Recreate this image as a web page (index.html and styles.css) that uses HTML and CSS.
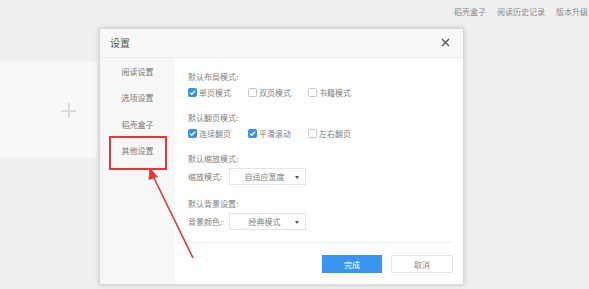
FILE: index.html
```html
<!DOCTYPE html>
<html lang="zh">
<head>
<meta charset="utf-8">
<link rel="stylesheet" href="styles.css">
</head>
<body>
<div class="page">
  <div class="topbar">
    <span>稻壳盒子</span>
    <span>阅读历史记录</span>
    <span>版本升级</span>
  </div>
  <div class="card"><span class="plus"></span></div>
</div>

<div class="dialog">
  <div class="dlg-head">
    <span class="dlg-title">设置</span>
    <svg class="close" width="9" height="9" viewBox="0 0 9 9"><path d="M1 1L8 8M8 1L1 8" stroke="#555" stroke-width="1.3"/></svg>
  </div>
  <div class="dlg-body">
    <div class="side">
      <div class="side-item">阅读设置</div>
      <div class="side-item">选项设置</div>
      <div class="side-item">稻壳盒子</div>
      <div class="side-item mark">其他设置</div>
    </div>
    <div class="main">
      <div class="group">
        <div class="label">默认布局模式:</div>
        <div class="row">
          <span class="opt"><span class="box on"><svg width="9" height="9" viewBox="0 0 9 9"><path d="M2 4.6L3.8 6.3L7 2.8" fill="none" stroke="#fff" stroke-width="1.3"/></svg></span>单页模式</span>
          <span class="opt"><span class="box"></span>双页模式</span>
          <span class="opt"><span class="box"></span>书籍模式</span>
        </div>
      </div>
      <div class="group">
        <div class="label">默认翻页模式:</div>
        <div class="row">
          <span class="opt"><span class="box on"><svg width="9" height="9" viewBox="0 0 9 9"><path d="M2 4.6L3.8 6.3L7 2.8" fill="none" stroke="#fff" stroke-width="1.3"/></svg></span>连续翻页</span>
          <span class="opt"><span class="box on"><svg width="9" height="9" viewBox="0 0 9 9"><path d="M2 4.6L3.8 6.3L7 2.8" fill="none" stroke="#fff" stroke-width="1.3"/></svg></span>平滑滚动</span>
          <span class="opt"><span class="box"></span>左右翻页</span>
        </div>
      </div>
      <div class="group">
        <div class="label">默认缩放模式:</div>
        <div class="row sel-row">
          <span class="sel-label">缩放模式:</span>
          <span class="select"><span class="sel-text">自适应宽度</span><span class="caret"></span></span>
        </div>
      </div>
      <div class="group">
        <div class="label">默认背景设置:</div>
        <div class="row sel-row">
          <span class="sel-label">背景颜色:</span>
          <span class="select"><span class="sel-text">经典模式</span><span class="caret"></span></span>
        </div>
      </div>
      <div class="footer">
        <span class="btn primary">完成</span>
        <span class="btn">取消</span>
      </div>
    </div>
  </div>
</div>

<svg class="arrow" width="589" height="289" viewBox="0 0 589 289">
  <line x1="193" y1="258" x2="153" y2="176" stroke="#e2383c" stroke-width="1.6"/>
  <path d="M149.5 167.5L158 177L148.5 180Z" fill="#e2383c"/>
</svg>
</body>
</html>
```

FILE: styles.css
```css
* { box-sizing: border-box; }
html, body {
  margin: 0;
  padding: 0;
  width: 589px;
  height: 289px;
  overflow: hidden;
  background: #f0f0f0;
  font-family: "Noto Sans CJK SC", "Noto Sans", sans-serif;
  color: #777;
}
.page {
  position: relative;
  width: 589px;
  height: 289px;
}
.topbar {
  height: 22px;
  display: flex;
  justify-content: flex-end;
  align-items: center;
  gap: 11px;
  padding-right: 1px;
  font-size: 8px;
  color: #888;
}
.card {
  margin-top: 40px;
  width: 97px;
  height: 96px;
  background: #f8f8f8;
  position: relative;
}
.plus {
  position: absolute;
  left: 61px;
  top: 41px;
  width: 15px;
  height: 15px;
}
.plus::before, .plus::after {
  content: "";
  position: absolute;
  background: #dcdcdc;
}
.plus::before { left: 0; top: 7px; width: 15px; height: 1.5px; }
.plus::after { left: 7px; top: 0; width: 1.5px; height: 15px; }

.dialog {
  position: absolute;
  left: 99px;
  top: 28px;
  width: 365px;
  height: 257px;
  background: #fff;
  border: 1px solid #d8d8d8;
  box-shadow: 0 0 5px rgba(0,0,0,0.18);
  display: flex;
  flex-direction: column;
}
.dlg-head {
  height: 29px;
  flex: none;
  display: flex;
  align-items: center;
  justify-content: space-between;
  padding: 0 13px 1px 10px;
  background: #f8f8f8;
  border-bottom: 1px solid #ececec;
}
.dlg-title {
  font-size: 10px;
  color: #555;
}
.dlg-body {
  flex: 1;
  display: flex;
}
.side {
  width: 75px;
  flex: none;
  background: #f7f7f7;
}
.side-item {
  height: 26.5px;
  display: flex;
  align-items: center;
  justify-content: center;
  font-size: 8px;
  color: #777;
  position: relative;
}
.side-item.mark::after {
  content: "";
  position: absolute;
  left: 9px;
  top: -2px;
  width: 54px;
  height: 30px;
  border: 2px solid #dc3a3f;
}
.main {
  flex: 1;
  display: flex;
  flex-direction: column;
  padding: 12px 10px 11px 13px;
}
.group { margin-bottom: 11px; }
.label {
  height: 14px;
  line-height: 14px;
  font-size: 8px;
  color: #808080;
}
.row {
  height: 16px;
  display: flex;
  align-items: center;
  font-size: 8px;
  color: #808080;
}
.opt {
  width: 60px;
  display: flex;
  align-items: center;
  gap: 2px;
}
.box {
  width: 9px;
  height: 9px;
  border: 1px solid #c4c4c4;
  border-radius: 1.5px;
  background: #fff;
  display: inline-flex;
}
.box.on {
  background: #3c8fe8;
  border-color: #3c8fe8;
}
.box svg { margin: -1px; }
.sel-row { height: 20px; }
.sel-label { width: 41px; }
.select {
  width: 77px;
  height: 17px;
  border: 1px solid #e4e4e4;
  display: flex;
  align-items: center;
  justify-content: center;
  position: relative;
  background: #fff;
}
.sel-text { margin-right: 6px; }
.caret {
  position: absolute;
  right: 6px;
  top: 7px;
  border-left: 2.5px solid transparent;
  border-right: 2.5px solid transparent;
  border-top: 3px solid #555;
}
.footer {
  margin-top: auto;
  border-top: 1px solid #efefef;
  padding-top: 12px;
  display: flex;
  justify-content: flex-end;
  gap: 9px;
  margin-left: -13px;
}
.btn {
  width: 62px;
  height: 18px;
  display: flex;
  align-items: center;
  justify-content: center;
  font-size: 8px;
  color: #888;
  border: 1px solid #e4e4e4;
  background: #fff;
}
.btn.primary {
  width: 60px;
  background: #3a94f2;
  border-color: #3a94f2;
  color: #fff;
}
.arrow {
  position: absolute;
  left: 0;
  top: 0;
  pointer-events: none;
}
```
